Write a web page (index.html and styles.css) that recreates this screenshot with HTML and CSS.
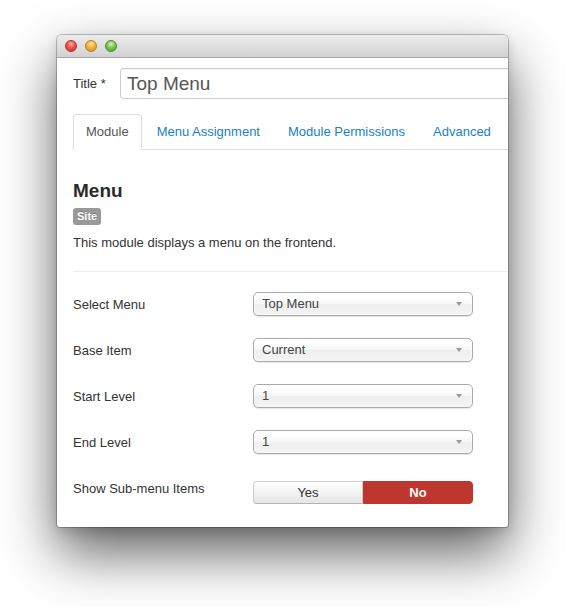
FILE: index.html
```html
<!DOCTYPE html>
<html lang="en">
<head>
  <meta charset="UTF-8" />
  <title>Module: Menu</title>
  <link rel="stylesheet" href="styles.css">
</head>
<body>
  <div class="window">
    <div class="titlebar">
      <span class="light red"></span>
      <span class="light yellow"></span>
      <span class="light green"></span>
    </div>

    <div class="content">
      <div class="title-row">
        <label for="title">Title *</label>
        <input type="text" id="title" class="title-input" value="Top Menu" readonly>
      </div>

      <ul class="tabs">
        <li class="active"><a href="#">Module</a></li>
        <li><a href="#">Menu Assignment</a></li>
        <li><a href="#">Module Permissions</a></li>
        <li><a href="#">Advanced</a></li>
      </ul>

      <div class="tab-pane">
        <h3>Menu</h3>
        <span class="badge">Site</span>
        <p class="desc">This module displays a menu on the frontend.</p>
        <hr>

        <div class="control-group">
          <div class="control-label">Select Menu</div>
          <div class="select"><span>Top Menu</span><b class="arrow"></b></div>
        </div>
        <div class="control-group">
          <div class="control-label">Base Item</div>
          <div class="select"><span>Current</span><b class="arrow"></b></div>
        </div>
        <div class="control-group">
          <div class="control-label">Start Level</div>
          <div class="select"><span>1</span><b class="arrow"></b></div>
        </div>
        <div class="control-group">
          <div class="control-label">End Level</div>
          <div class="select"><span>1</span><b class="arrow"></b></div>
        </div>
        <div class="control-group">
          <div class="control-label">Show Sub-menu Items</div>
          <div class="toggle">
            <span class="btn">Yes</span>
            <span class="btn btn-no">No</span>
          </div>
        </div>
      </div>
    </div>
  </div>
</body>
</html>
```

FILE: styles.css
```css
html {
  background: #fff;
}
body {
  margin: 0;
  padding: 35px 0 80px 57px;
  min-height: 607px;
  box-sizing: border-box;
  font-family: "Liberation Sans", Arial, sans-serif;
  font-size: 13px;
  line-height: 18px;
  color: #333;
}
.window {
  width: 451px;
  height: 492px;
  background: #fff;
  border-radius: 5px 5px 3px 3px;
  overflow: hidden;
  box-shadow: 0 0 0 1px rgba(0, 0, 0, 0.22), 0 4px 12px rgba(0, 0, 0, 0.15), 0 26px 55px rgba(0, 0, 0, 0.62);
}
.titlebar {
  height: 22px;
  display: flex;
  align-items: center;
  gap: 8px;
  padding-left: 8px;
  background: linear-gradient(#ececec, #d2d2d2);
  border-bottom: 1px solid #a6a6a6;
}
.light {
  width: 12px;
  height: 12px;
  border-radius: 50%;
  box-sizing: border-box;
}
.red {
  background: radial-gradient(circle at 50% 30%, #ffb1ab 0, #f2524b 45%, #c9302a 100%);
  border: 1px solid #b0312b;
}
.yellow {
  background: radial-gradient(circle at 50% 30%, #ffe6a8 0, #f3b33a 45%, #d08a1c 100%);
  border: 1px solid #b97f1c;
}
.green {
  background: radial-gradient(circle at 50% 30%, #d7f5b6 0, #80c654 45%, #4f9a2a 100%);
  border: 1px solid #4b8f2b;
}
.content {
  width: 520px;
  padding: 10px 0 0 16px;
}
.title-row {
  display: flex;
  align-items: center;
}
.title-row label {
  width: 47px;
}
.title-input {
  width: 440px;
  height: 31px;
  box-sizing: border-box;
  padding: 0 6px;
  border: 1px solid #ccc;
  border-radius: 3px;
  font-family: "Liberation Sans", Arial, sans-serif;
  font-size: 19px;
  color: #555;
  box-shadow: inset 0 1px 1px rgba(0, 0, 0, 0.05);
  outline: none;
}
.tabs {
  display: flex;
  list-style: none;
  margin: 15px 0 0;
  padding: 0;
  border-bottom: 1px solid #ddd;
}
.tabs li {
  margin: 0 2px -1px 0;
}
.tabs a {
  display: block;
  padding: 8px 12px;
  border: 1px solid transparent;
  border-radius: 4px 4px 0 0;
  color: #1a7fc4;
  text-decoration: none;
}
.tabs .active a {
  color: #555;
  background: #fff;
  border-color: #ddd #ddd transparent;
}
.tab-pane {
  padding-top: 29px;
}
h3 {
  margin: 0;
  font-size: 19px;
  line-height: 24px;
  font-weight: bold;
  color: #2b2b2b;
}
.badge {
  display: block;
  width: max-content;
  margin-top: 5px;
  padding: 2px 4px;
  font-size: 11px;
  line-height: 13px;
  font-weight: bold;
  color: #fff;
  background: #999;
  border-radius: 3px;
  text-shadow: 0 -1px 0 rgba(0, 0, 0, 0.25);
}
.desc {
  margin: 9px 0 0;
}
hr {
  margin: 19px 0 20px;
  border: 0;
  border-top: 1px solid #eee;
}
.control-group {
  display: flex;
  align-items: flex-start;
  margin-bottom: 22px;
}
.control-label {
  width: 180px;
  padding-top: 4px;
}
.select {
  width: 220px;
  height: 24px;
  box-sizing: border-box;
  display: flex;
  align-items: center;
  justify-content: space-between;
  padding: 0 10px 0 8px;
  border: 1px solid #aaa;
  border-radius: 5px;
  background: linear-gradient(#fff 20%, #f6f6f6 50%, #eee 52%, #f4f4f4 100%);
  box-shadow: inset 0 0 3px #fff, 0 1px 1px rgba(0, 0, 0, 0.1);
  color: #444;
  line-height: 22px;
}
.arrow {
  width: 0;
  height: 0;
  border-left: 3px solid transparent;
  border-right: 3px solid transparent;
  border-top: 4px solid #999;
}
.toggle {
  display: flex;
  width: 220px;
  margin-top: 5px;
}
.btn {
  flex: 1;
  height: 23px;
  box-sizing: border-box;
  line-height: 21px;
  text-align: center;
  border: 1px solid #ccc;
  border-bottom-color: #b3b3b3;
  border-radius: 4px 0 0 4px;
  background: linear-gradient(#fff, #e6e6e6);
  color: #333;
}
.btn-no {
  border: 1px solid #bd362f;
  border-radius: 0 4px 4px 0;
  background: #bd362f;
  color: #fff;
  font-weight: bold;
}
```
